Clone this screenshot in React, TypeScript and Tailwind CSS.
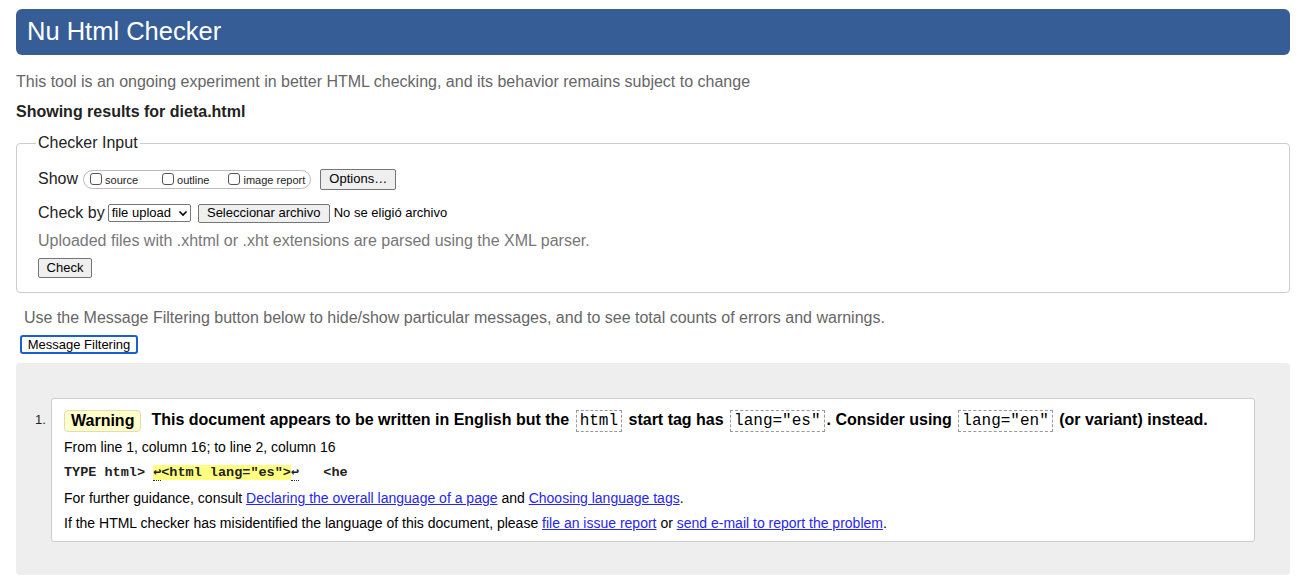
import React from "react";

const sans = { fontFamily: '"Liberation Sans", Arial, Helvetica, sans-serif' };
const mono = { fontFamily: '"Liberation Mono", "Courier New", monospace' };

function Code({ children }: { children: React.ReactNode }) {
  return (
    <code
      style={mono}
      className="mx-[2px] inline-block border border-dashed border-[#999] px-[3px] text-[16px] font-normal leading-[20px]"
    >
      {children}
    </code>
  );
}

function Nl() {
  return <span className="border-b border-dotted border-[#333]">↩</span>;
}

export default function App() {
  return (
    <div style={sans} className="min-h-[581px] w-full bg-white pl-[16px] pr-[26px] pt-[9px] text-[#222]">
      <header className="flex h-[46px] items-center rounded-[6px] bg-[#365d95] pl-[11px]">
        <h1 className="text-[25.5px] leading-none text-white">Nu Html Checker</h1>
      </header>

      <p className="mt-[18px] text-[16px] leading-[18px] text-[#666]">
        This tool is an ongoing experiment in better HTML checking, and its behavior remains subject to change
      </p>
      <p className="mt-[12px] text-[16px] font-bold leading-[18px] text-[#222]">Showing results for dieta.html</p>

      <fieldset className="mt-[13px] rounded-[4px] border border-[#ccc] pb-[14px] pl-[21px] pr-[21px]">
        <legend className="ml-[-2px] px-[2px] text-[16px] leading-[18px] text-[#222]">Checker Input</legend>

        <div className="mt-[16px] flex h-[22px] items-center">
          <span className="text-[16px] text-[#222]">Show</span>
          <div className="ml-[5px] flex h-[19px] items-center rounded-full border border-[#bbb] pl-[6px] pr-[5px] text-[11px]">
            <label className="flex items-center">
              <span className="inline-block h-[12px] w-[12px] rounded-[3px] border border-[#555] bg-white" />
              <span className="ml-[3px] mt-[2px]">source</span>
            </label>
            <label className="ml-[24px] flex items-center">
              <span className="inline-block h-[12px] w-[12px] rounded-[3px] border border-[#555] bg-white" />
              <span className="ml-[3px] mt-[2px]">outline</span>
            </label>
            <label className="ml-[19px] flex items-center">
              <span className="inline-block h-[12px] w-[12px] rounded-[3px] border border-[#555] bg-white" />
              <span className="ml-[3px] mt-[2px]">image report</span>
            </label>
          </div>
          <span className="ml-[9px] flex h-[21px] w-[76px] items-center justify-center rounded-[2px] border border-[#767676] bg-[#efefef] text-[13px] text-black">
            Options…
          </span>
        </div>

        <div className="mt-[13px] flex h-[20px] items-center">
          <span className="text-[16px] text-[#222]">Check by</span>
          <span className="ml-[3px] flex h-[18px] w-[83px] items-center justify-between rounded-[2px] border border-[#767676] bg-white pl-[3px] pr-[2px] text-[13px] text-black">
            file upload
            <svg width="10" height="10" viewBox="0 0 10 10">
              <path d="M1.5 3.5 L5 7 L8.5 3.5" fill="none" stroke="#000" strokeWidth="1.6" />
            </svg>
          </span>
          <span className="ml-[7px] flex h-[19px] w-[132px] items-center justify-center rounded-[2px] border border-[#767676] bg-[#efefef] text-[13px] text-black">
            Seleccionar archivo
          </span>
          <span className="ml-[4px] text-[13px] text-black">No se eligió archivo</span>
        </div>

        <p className="mt-[9px] text-[16px] leading-[18px] text-[#777]">
          Uploaded files with .xhtml or .xht extensions are parsed using the XML parser.
        </p>

        <div className="mt-[8px] flex">
          <span className="inline-flex h-[20px] w-[54px] items-center justify-center rounded-[2px] border border-[#767676] bg-[#efefef] text-[13px] text-black">
            Check
          </span>
        </div>
      </fieldset>

      <p className="ml-[8px] mt-[16px] text-[16px] leading-[18px] text-[#666]">
        Use the Message Filtering button below to hide/show particular messages, and to see total counts of errors and warnings.
      </p>
      <div className="mt-[8px] flex pl-[4px]">
        <span className="inline-flex h-[19px] w-[118px] items-center justify-center rounded-[3px] border-2 border-[#1a5fd0] bg-white text-[13px] text-black">
          Message Filtering
        </span>
      </div>

      <div className="mt-[9px] h-[212px] rounded-[4px] bg-[#eeeeee] pl-[19px] pr-[35px] pt-[35px]">
        <ol className="list-none">
          <li className="flex">
            <span className="mt-[15px] w-[16px] shrink-0 text-[13px] leading-[14px] text-[#222]">1.</span>
            <div className="h-[144px] flex-1 rounded-[3px] border border-[#ccc] bg-white pl-[12px] pt-[10px]">
              <p className="flex items-center text-[16px] font-bold leading-[22px] text-black">
                <span className="inline-flex h-[22px] items-center rounded-[4px] border border-[#e2ddb0] bg-[#ffffcc] px-[6px]">
                  Warning
                </span>
                <span className="ml-[10px]">
                  This document appears to be written in English but the <Code>html</Code> start tag has{" "}
                  <Code>lang="es"</Code>. Consider using <Code>lang="en"</Code> (or variant) instead.
                </span>
              </p>
              <p className="mt-[7px] text-[14px] leading-[16px] text-black">From line 1, column 16; to line 2, column 16</p>
              <p style={mono} className="mt-[10px] whitespace-pre text-[13.5px] font-bold leading-[16px] text-[#222]">
                {"TYPE html> "}
                <span className="bg-[#ffff80]">
                  <Nl />
                  {'<html lang="es">'}
                </span>
                <Nl />
                {"   <he"}
              </p>
              <p className="mt-[9px] text-[14px] leading-[16px] text-black">
                For further guidance, consult{" "}
                <a className="text-[#2626f0] underline">Declaring the overall language of a page</a> and{" "}
                <a className="text-[#2626f0] underline">Choosing language tags</a>.
              </p>
              <p className="mt-[9px] text-[14px] leading-[16px] text-black">
                If the HTML checker has misidentified the language of this document, please{" "}
                <a className="text-[#2626f0] underline">file an issue report</a> or{" "}
                <a className="text-[#2626f0] underline">send e-mail to report the problem</a>.
              </p>
            </div>
          </li>
        </ol>
      </div>
    </div>
  );
}
